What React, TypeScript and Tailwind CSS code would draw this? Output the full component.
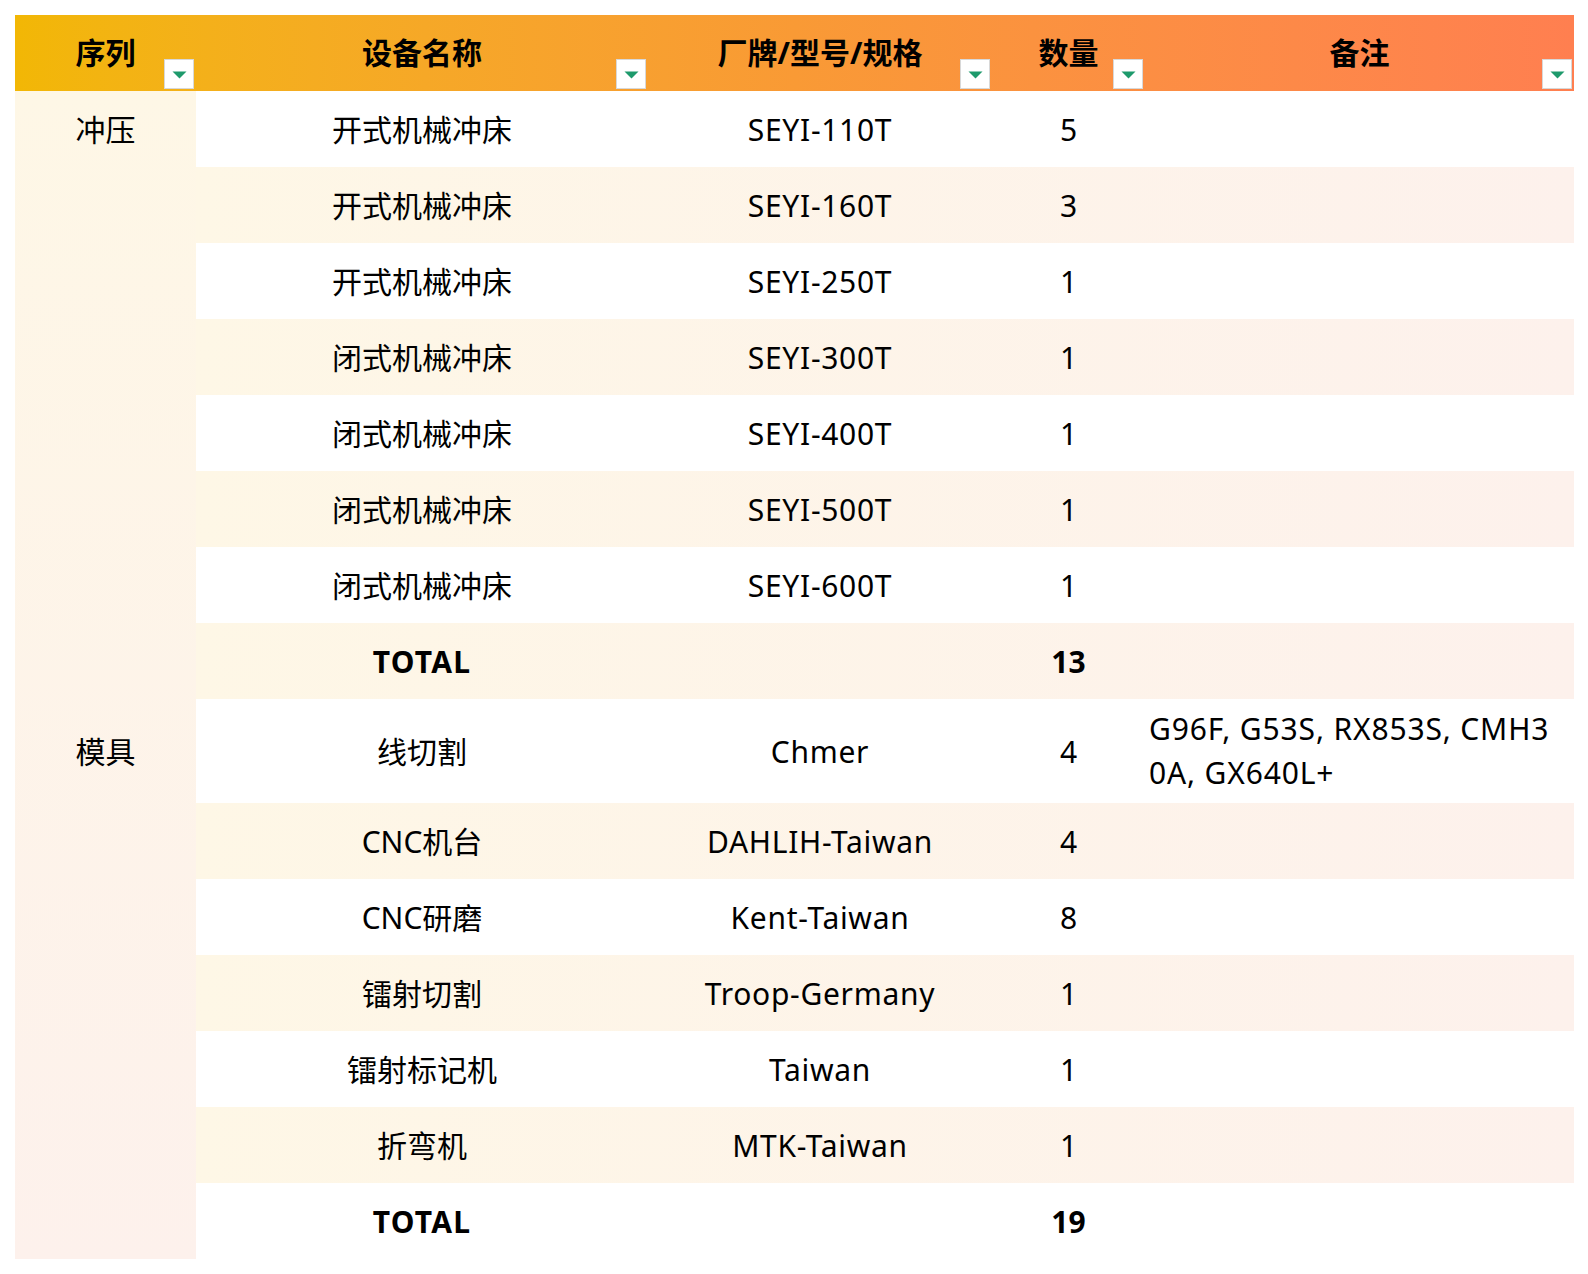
import React from "react";

type Row = {
  group?: string;
  name: string;
  model?: string;
  qty: string;
  note?: string[];
  total?: boolean;
  tall?: boolean;
};

const rows: Row[] = [
  { group: "冲压", name: "开式机械冲床", model: "SEYI-110T", qty: "5" },
  { name: "开式机械冲床", model: "SEYI-160T", qty: "3" },
  { name: "开式机械冲床", model: "SEYI-250T", qty: "1" },
  { name: "闭式机械冲床", model: "SEYI-300T", qty: "1" },
  { name: "闭式机械冲床", model: "SEYI-400T", qty: "1" },
  { name: "闭式机械冲床", model: "SEYI-500T", qty: "1" },
  { name: "闭式机械冲床", model: "SEYI-600T", qty: "1" },
  { name: "TOTAL", qty: "13", total: true },
  {
    group: "模具",
    name: "线切割",
    model: "Chmer",
    qty: "4",
    note: ["G96F, G53S, RX853S, CMH3", "0A, GX640L+"],
    tall: true,
  },
  { name: "CNC机台", model: "DAHLIH-Taiwan", qty: "4" },
  { name: "CNC研磨", model: "Kent-Taiwan", qty: "8" },
  { name: "镭射切割", model: "Troop-Germany", qty: "1" },
  { name: "镭射标记机", model: "Taiwan", qty: "1" },
  { name: "折弯机", model: "MTK-Taiwan", qty: "1" },
  { name: "TOTAL", qty: "19", total: true },
];

const headers = ["序列", "设备名称", "厂牌/型号/规格", "数量", "备注"];

function FilterButton() {
  return (
    <span className="absolute right-[2px] bottom-[2px] flex h-[30px] w-[30px] items-center justify-center border-[1.5px] border-[#d8d8d8] bg-white">
      <svg width="15" height="8" viewBox="0 0 15 8" className="mt-[1px]">
        <path d="M0.5 0.5 L14.5 0.5 L7.5 7.5 Z" fill="#1e9a6c" />
      </svg>
    </span>
  );
}

export default function App() {
  return (
    <div className="min-h-screen bg-white pt-[15px] pl-[15px] font-['Noto_Sans','Noto_Sans_CJK_SC',sans-serif] text-[30px] text-black">
      <div className="w-[1559px]">
        <div className="grid h-[76px] grid-cols-[181px_452px_344px_153px_429px] bg-linear-to-r from-[#f2b705] via-[#f99a35] to-[#ff7f50] font-bold">
          {headers.map((h) => (
            <div key={h} className="relative flex items-center justify-center leading-none">
              {h}
              <FilterButton />
            </div>
          ))}
        </div>

        <div className="flex">
          <div className="flex w-[181px] flex-col bg-linear-to-b from-[#fef7e6] to-[#fdf1ec]">
            {rows.map((r, i) => (
              <div
                key={i}
                className={`flex items-center justify-center ${r.tall ? "h-[104px]" : "h-[76px]"}`}
              >
                {r.group}
              </div>
            ))}
          </div>

          <div className="flex flex-1 flex-col">
            {rows.map((r, i) => (
              <div
                key={i}
                className={`grid grid-cols-[452px_344px_153px_429px] ${r.tall ? "h-[104px]" : "h-[76px]"} ${
                  i % 2 === 1 ? "bg-linear-to-r from-[#fef7e6] to-[#fdf1ec]" : "bg-white"
                } ${r.total ? "font-bold" : ""}`}
              >
                <div className={`flex items-center justify-center ${r.total ? "tracking-[1.2px]" : ""}`}>
                  {r.name}
                </div>
                <div className="flex items-center justify-center tracking-[0.7px]">{r.model}</div>
                <div className="flex items-center justify-center">{r.qty}</div>
                <div className="flex flex-col justify-center pl-[4px] leading-[44.5px] tracking-[0.85px] whitespace-nowrap">
                  {r.note?.map((line) => (
                    <span key={line}>{line}</span>
                  ))}
                </div>
              </div>
            ))}
          </div>
        </div>
      </div>
    </div>
  );
}
